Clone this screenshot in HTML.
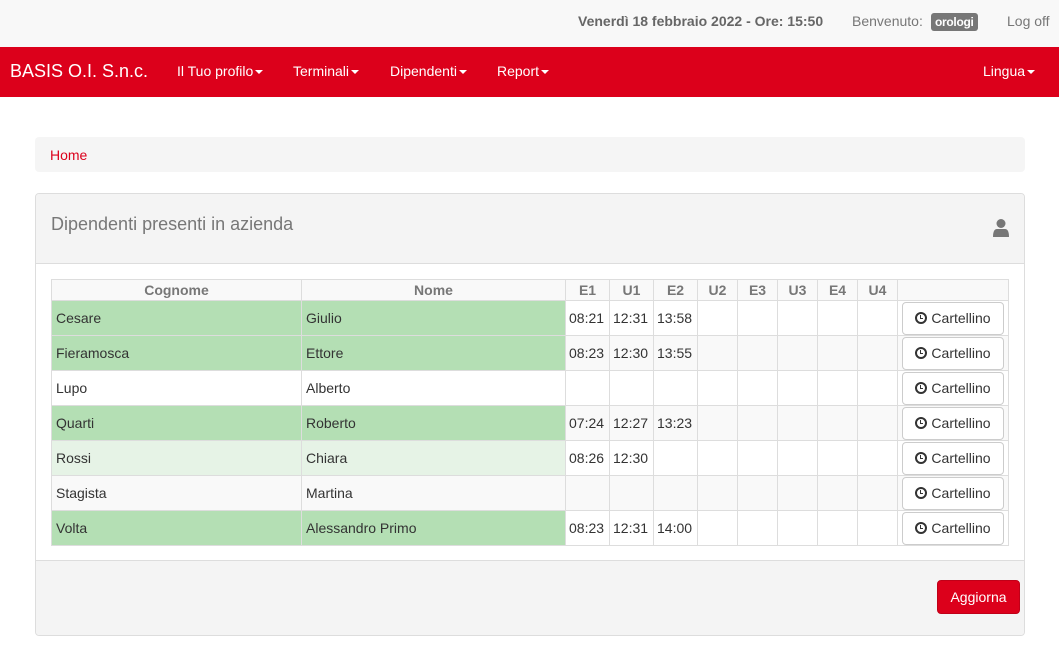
<!DOCTYPE html>
<html><head><meta charset="utf-8"><style>
*{box-sizing:border-box;margin:0;padding:0}
body{width:1059px;height:650px;background:#fff;font-family:"Liberation Sans",Arial,sans-serif;font-size:14px;color:#333;overflow:hidden;position:relative}
.top{position:absolute;left:0;top:0;width:1059px;height:47px;background:#f8f8f8}
.top span{position:absolute;top:13px;font-size:14px;color:#777}
.top .badge{background:#777;color:#fff;font-weight:bold;font-size:12px;padding:2px 4px;border-radius:3px;top:13px;letter-spacing:-0.3px}
.nav{position:absolute;left:0;top:47px;width:1059px;height:50px;background:#dc001b;color:#fff}
.nav span{position:absolute;top:16px;font-size:14px}
.caret{display:inline-block;width:0;height:0;border-top:4px solid #fff;border-left:4px solid transparent;border-right:4px solid transparent;vertical-align:middle;margin-left:2px}
.bc{position:absolute;left:35px;top:137px;width:990px;height:35px;background:#f5f5f5;border-radius:4px;padding:10px 15px;color:#dc001b}
.panel{position:absolute;left:35px;top:193px;width:990px;height:443px;border:1px solid #ddd;border-radius:4px;background:#fff;overflow:hidden}
.ph{height:70px;background:#f4f4f4;border-bottom:1px solid #ddd;padding:20px 15px;font-size:18px;color:#777}
.pf{position:absolute;left:0;bottom:0;width:988px;height:75px;background:#f4f4f4;border-top:1px solid #ddd}
table{position:absolute;left:15px;top:85px;border-collapse:collapse;width:958px}
td,th{border:1px solid #ddd;padding:0 4px;height:35px;font-size:14px;color:#333;white-space:nowrap}
th{height:21px;background:#f9f9f9;color:#777;text-align:center}
td.t{text-align:left;padding:0 3px}
.g{background:#b4dfb4}.lg{background:#e6f3e6}.s{background:#f9f9f9}
.btn{display:block;margin:0 auto;width:102px;height:33px;border:1px solid #ccc;border-radius:4px;background:#fff;font-size:14px;color:#333;line-height:31px;text-align:center}
.clk{display:inline-block;width:12px;height:12px;border:2px solid #333;border-radius:50%;position:relative;vertical-align:-1px;margin-right:4px}
.clk:after{content:"";position:absolute;left:3px;top:1px;width:2px;height:3px;border-left:1.5px solid #333;border-bottom:1.5px solid #333}
.agg{position:absolute;right:4px;bottom:21px;width:83px;height:34px;background:#dc001b;border:1px solid #c00018;border-radius:4px;color:#fff;text-align:center;line-height:32px}
</style></head><body>
<div class="top">
<span style="left:578px;font-weight:bold;color:#666">Venerdì 18 febbraio 2022 - Ore: 15:50</span>
<span style="left:852px">Benvenuto:</span>
<span class="badge" style="left:931px">orologi</span>
<span style="left:1007px">Log off</span>
</div>
<div class="nav">
<span style="left:10px;top:14px;font-size:18px">BASIS O.I. S.n.c.</span>
<span style="left:177px">Il Tuo profilo<i class="caret"></i></span>
<span style="left:293px">Terminali<i class="caret"></i></span>
<span style="left:390px">Dipendenti<i class="caret"></i></span>
<span style="left:497px">Report<i class="caret"></i></span>
<span style="left:983px">Lingua<i class="caret"></i></span>
</div>
<div class="bc">Home</div>
<div class="panel">
<div class="ph">Dipendenti presenti in azienda
<svg style="position:absolute;left:956px;top:24px" width="18" height="20" viewBox="0 0 18 20"><circle cx="9" cy="5.5" r="4.5" fill="#777"/><path d="M1 19 Q1 11 5 11 L13 11 Q17 11 17 19 Z" fill="#777"/></svg></div>
<table>
<tr><th style="width:250px">Cognome</th><th style="width:264px">Nome</th><th style="width:44px">E1</th><th style="width:44px">U1</th><th style="width:44px">E2</th><th style="width:40px">U2</th><th style="width:40px">E3</th><th style="width:40px">U3</th><th style="width:40px">E4</th><th style="width:40px">U4</th><th></th></tr>
<tr><td class="g">Cesare</td><td class="g">Giulio</td><td class="t">08:21</td><td class="t">12:31</td><td class="t">13:58</td><td></td><td></td><td></td><td></td><td></td><td><span class="btn"><i class="clk"></i>Cartellino</span></td></tr>
<tr class="s"><td class="g">Fieramosca</td><td class="g">Ettore</td><td class="t">08:23</td><td class="t">12:30</td><td class="t">13:55</td><td></td><td></td><td></td><td></td><td></td><td><span class="btn"><i class="clk"></i>Cartellino</span></td></tr>
<tr><td>Lupo</td><td>Alberto</td><td></td><td></td><td></td><td></td><td></td><td></td><td></td><td></td><td><span class="btn"><i class="clk"></i>Cartellino</span></td></tr>
<tr class="s"><td class="g">Quarti</td><td class="g">Roberto</td><td class="t">07:24</td><td class="t">12:27</td><td class="t">13:23</td><td></td><td></td><td></td><td></td><td></td><td><span class="btn"><i class="clk"></i>Cartellino</span></td></tr>
<tr><td class="lg">Rossi</td><td class="lg">Chiara</td><td class="t">08:26</td><td class="t">12:30</td><td></td><td></td><td></td><td></td><td></td><td></td><td><span class="btn"><i class="clk"></i>Cartellino</span></td></tr>
<tr class="s"><td>Stagista</td><td>Martina</td><td></td><td></td><td></td><td></td><td></td><td></td><td></td><td></td><td><span class="btn"><i class="clk"></i>Cartellino</span></td></tr>
<tr><td class="g">Volta</td><td class="g">Alessandro Primo</td><td class="t">08:23</td><td class="t">12:31</td><td class="t">14:00</td><td></td><td></td><td></td><td></td><td></td><td><span class="btn"><i class="clk"></i>Cartellino</span></td></tr>
</table>
<div class="pf"><div class="agg">Aggiorna</div></div>
</div>
</body></html>
